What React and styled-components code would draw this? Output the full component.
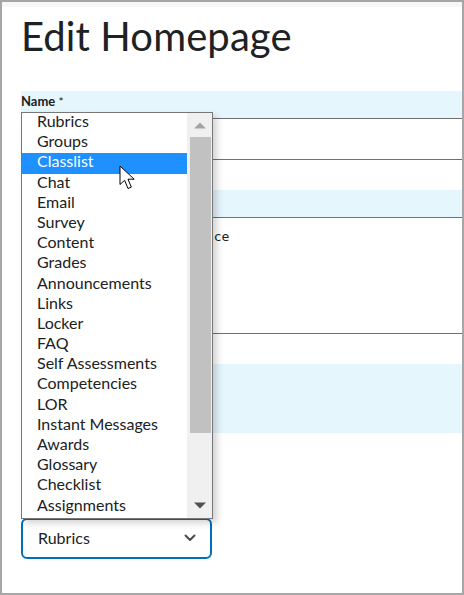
import React from "react";
import styled, { createGlobalStyle } from "styled-components";

const tools = [
  "Rubrics", "Groups", "Classlist", "Chat", "Email", "Survey", "Content",
  "Grades", "Announcements", "Links", "Locker", "FAQ", "Self Assessments",
  "Competencies", "LOR", "Instant Messages", "Awards", "Glossary",
  "Checklist", "Assignments",
];

const Global = createGlobalStyle`
  html, body { margin: 0; padding: 0; background: #fff; }
  * { box-sizing: border-box; }
`;

const Frame = styled.div`
  position: relative;
  width: 464px;
  height: 595px;
  border: 2px solid #a6a6a6;
  background: #fff;
  overflow: hidden;
  font-family: Lato, "Liberation Sans", sans-serif;
  color: #202122;
`;

const TopStrip = styled.div`
  height: 5px;
  background: #f7f7f7;
`;

const Body = styled.div`
  padding-left: 19px;
`;

const Title = styled.h1`
  margin: 0;
  height: 84px;
  padding-top: 5px;
  font-size: 40px;
  font-weight: 400;
  line-height: 48px;
  color: #202122;
  letter-spacing: 0.1px;
`;

const Band = styled.div`
  height: ${(p) => p.h}px;
  background: #e6f6fd;
  display: flex;
  align-items: center;
`;

const Label = styled.div`
  font-size: 13px;
  font-weight: 700;
  line-height: 16px;
  margin-top: -7px;
  span { font-weight: 400; font-size: 12px; }
`;

const Field = styled.div`
  height: ${(p) => p.h}px;
  border-top: 1px solid #6f6f6f;
  border-bottom: 1px solid #6f6f6f;
  padding: 11px 0 0 44px;
  font-family: "DejaVu Sans Mono", monospace;
  font-size: 13px;
  color: #202122;
  white-space: nowrap;
`;

const Gap = styled.div`
  height: ${(p) => p.h}px;
`;

const Select = styled.div`
  width: 191px;
  height: 41px;
  margin-top: 85px;
  border: 2px solid #006fbf;
  border-radius: 6px;
  display: flex;
  align-items: center;
  justify-content: space-between;
  padding: 0 14px 2px 15px;
  font-size: 16px;
  color: #202122;
`;

const Popup = styled.div`
  position: absolute;
  left: 19px;
  top: 110px;
  width: 192px;
  height: 407px;
  border: 1px solid #777;
  background: #fff;
  display: flex;
  box-shadow: 4px 4px 7px rgba(0, 0, 0, 0.18);
`;

const List = styled.div`
  flex: 1;
`;

const Item = styled.div`
  height: 20.2px;
  line-height: 15px;
  padding-left: 15px;
  font-size: 16px;
  white-space: nowrap;
  background: ${(p) => (p.active ? "#1e90ff" : "transparent")};
  color: ${(p) => (p.active ? "#fff" : "#202122")};
`;

const Scrollbar = styled.div`
  width: 25px;
  background: #f0f0f0;
  display: flex;
  flex-direction: column;
  align-items: center;
`;

const Arrow = styled.div`
  height: 24px;
  display: flex;
  align-items: center;
  justify-content: center;
`;

const Thumb = styled.div`
  width: 21px;
  height: 296px;
  margin-left: 1px;
  background: #c1c1c1;
`;

const Cursor = styled.svg`
  position: absolute;
  left: 117px;
  top: 163px;
`;

export default function App() {
  return (
    <Frame>
      <Global />
      <TopStrip />
      <Body>
        <Title>Edit Homepage</Title>
        <Band h={27}>
          <Label>
            Name <span>*</span>
          </Label>
        </Band>
        <Field h={42} />
        <Gap h={30} />
        <Band h={27} />
        <Field h={117}>Course Home Interface</Field>
        <Gap h={30} />
        <Band h={69} />
        <Select>
          <span>Rubrics</span>
          <svg width="12" height="8" viewBox="0 0 12 8">
            <path d="M1.5 1.5 L6 6 L10.5 1.5" fill="none" stroke="#494c4e" strokeWidth="2" strokeLinecap="round" strokeLinejoin="round" />
          </svg>
        </Select>
      </Body>

      <Popup>
        <List>
          {tools.map((t) => (
            <Item key={t} active={t === "Classlist"}>
              {t}
            </Item>
          ))}
        </List>
        <Scrollbar>
          <Arrow>
            <svg width="12" height="7" viewBox="0 0 12 7">
              <path d="M0 6.5 L6 0.5 L12 6.5 Z" fill="#a3a3a3" />
            </svg>
          </Arrow>
          <Thumb />
          <Gap h={60} />
          <Arrow>
            <svg width="12" height="7" viewBox="0 0 12 7">
              <path d="M0 0.5 L6 6.5 L12 0.5 Z" fill="#505050" />
            </svg>
          </Arrow>
        </Scrollbar>
      </Popup>

      <Cursor width="18" height="25" viewBox="0 0 18 25">
        <path d="M1 1 L1 19.5 L5.6 15.3 L9 23.5 L12.3 22.1 L9 14.2 L15.2 14.2 Z" fill="#fff" stroke="#000" strokeWidth="1" strokeLinejoin="miter" />
      </Cursor>
    </Frame>
  );
}
